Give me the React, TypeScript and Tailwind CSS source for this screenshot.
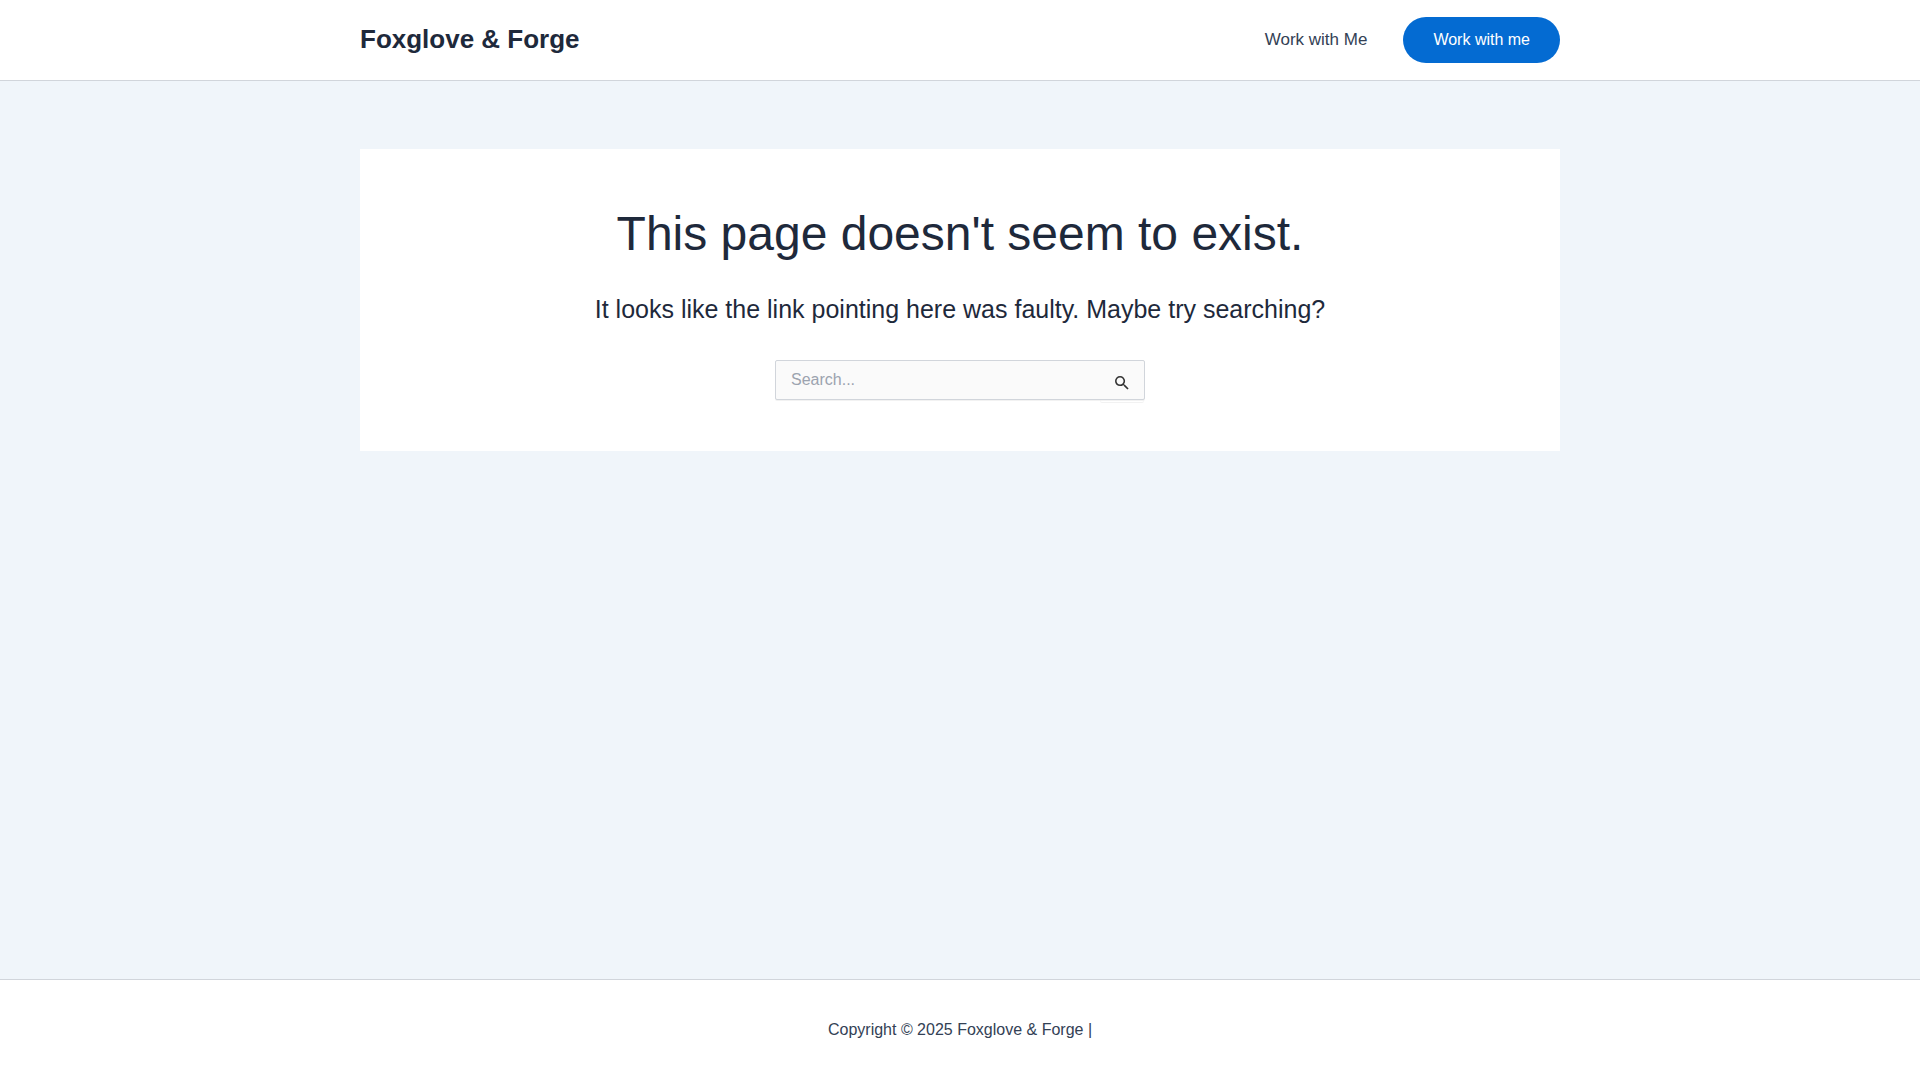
function SearchIcon() {
  return (
    <svg className="size-[14px]" viewBox="0 0 18 18" fill="currentColor" aria-hidden="true">
      <path d="M12.5 11h-.79l-.28-.27A6.471 6.471 0 0 0 13 6.5 6.5 6.5 0 1 0 6.5 13c1.61 0 3.09-.59 4.23-1.57l.27.28v.79l5 4.99L17.49 16l-4.99-5Zm-6 0C4.01 11 2 8.99 2 6.5S4.01 2 6.5 2 11 4.01 11 6.5 8.99 11 6.5 11Z" />
    </svg>
  );
}

function Header() {
  return (
    <header className="border-b border-[#d1d5db] bg-white">
      <div className="mx-auto flex h-20 max-w-[1200px] items-center justify-between">
        <a href="#" className="pb-0.5 text-[26px] leading-8 font-bold text-[#1e293b]">
          Foxglove &amp; Forge
        </a>
        <nav className="flex items-center gap-9">
          <a href="#" className="text-[17px] text-[#334155]">
            Work with Me
          </a>
          <button type="button" className="rounded-full bg-[#046bd2] px-[30px] py-[15px] text-base leading-4 text-white">
            Work with me
          </button>
        </nav>
      </div>
    </header>
  );
}

function SearchForm() {
  return (
    <form
      role="search"
      className="mx-auto flex h-10 w-[370px] rounded-xs border border-[#d1d5db] bg-[#fafafa] shadow-[0_1px_0_rgba(0,0,0,0.05)]"
      onSubmit={(e) => e.preventDefault()}
    >
      <input
        type="search"
        aria-label="Search"
        placeholder="Search..."
        className="min-w-0 flex-1 px-[15px] text-base text-gray-600 outline-none placeholder:text-[#9ca3af]"
      />
      <button
        type="submit"
        aria-label="Search"
        className="flex h-[41px] w-11 items-center justify-center rounded-xs pt-[3px] text-[#333] shadow-[0_1px_0_rgba(0,0,0,0.05)]"
      >
        <SearchIcon />
      </button>
    </form>
  );
}

export default function App() {
  return (
    <div className="flex min-h-screen flex-col bg-[#f0f5fa] font-['Liberation_Sans',Arial,sans-serif]">
      <Header />
      <main className="mx-auto w-full max-w-[1200px] flex-1 py-[68px]">
        <section className="bg-white px-6 pt-[50px] pb-[51px] text-center text-[#1e293b]">
          <h1 className="text-5xl leading-[70px]">This page doesn't seem to exist.</h1>
          <p className="mt-5 mb-[31px] text-[25px] leading-10">
            It looks like the link pointing here was faulty. Maybe try searching?
          </p>
          <SearchForm />
        </section>
      </main>
      <footer className="border-t border-[#d1d5db] bg-white py-[37px] text-center text-base leading-[26px] text-[#334155]">
        Copyright © 2025 Foxglove &amp; Forge |
      </footer>
    </div>
  );
}
